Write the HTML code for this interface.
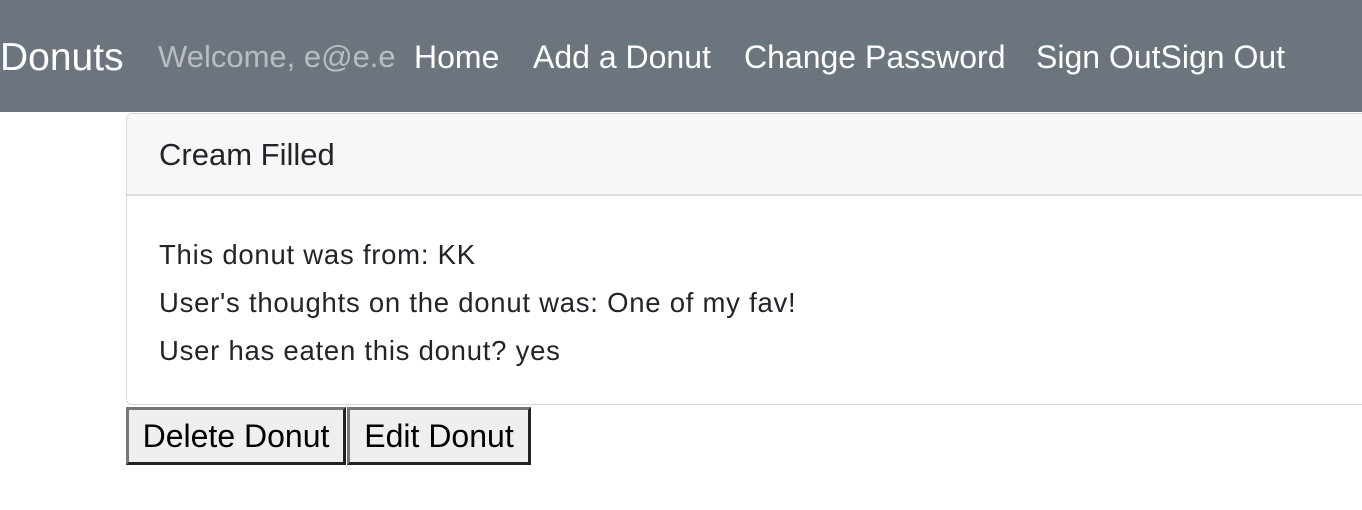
<!DOCTYPE html>
<html><head><style>
body{margin:0;width:1362px;height:510px;overflow:hidden;background:#fff;font-family:"Liberation Sans",sans-serif;color:#212529}
.nav{height:112px;background:#6c757d;position:relative}
.nav span{position:absolute;top:37px;font-size:32px;color:#fff;white-space:nowrap;line-height:40px}
.card{position:absolute;left:126px;top:113px;width:1250px;height:290px;border:1px solid #d9d9d9;border-radius:6px;overflow:hidden}
.hd{height:80px;background:#f7f7f7;border-bottom:2px solid #dcdcdc;font-size:31px;line-height:82px;padding-left:32px}
.bd{padding:38px 32px;font-size:27.5px;letter-spacing:0.75px}
.bd p{margin:0;height:48px;line-height:42px}
button{position:absolute;top:407px;height:58px;background:#efefef;border:3px outset #777;font-family:"Liberation Sans",sans-serif;font-size:32px;color:#000;padding:0;text-align:center}
</style></head><body>
<div class="nav">
<span style="left:0;font-size:39px;top:38px">Donuts</span>
<span style="left:158px;color:#b9bdc1;font-size:31px">Welcome, e@e.e</span>
<span style="left:414px">Home</span>
<span style="left:533px">Add a Donut</span>
<span style="left:744px">Change Password</span>
<span style="left:1036px">Sign OutSign Out</span>
</div>
<div class="card"><div class="hd">Cream Filled</div>
<div class="bd"><p>This donut was from: KK</p><p>User's thoughts on the donut was: One of my fav!</p><p>User has eaten this donut? yes</p></div></div>
<button style="left:126px;width:220px">Delete Donut</button>
<button style="left:347px;width:184px">Edit Donut</button>
</body></html>
